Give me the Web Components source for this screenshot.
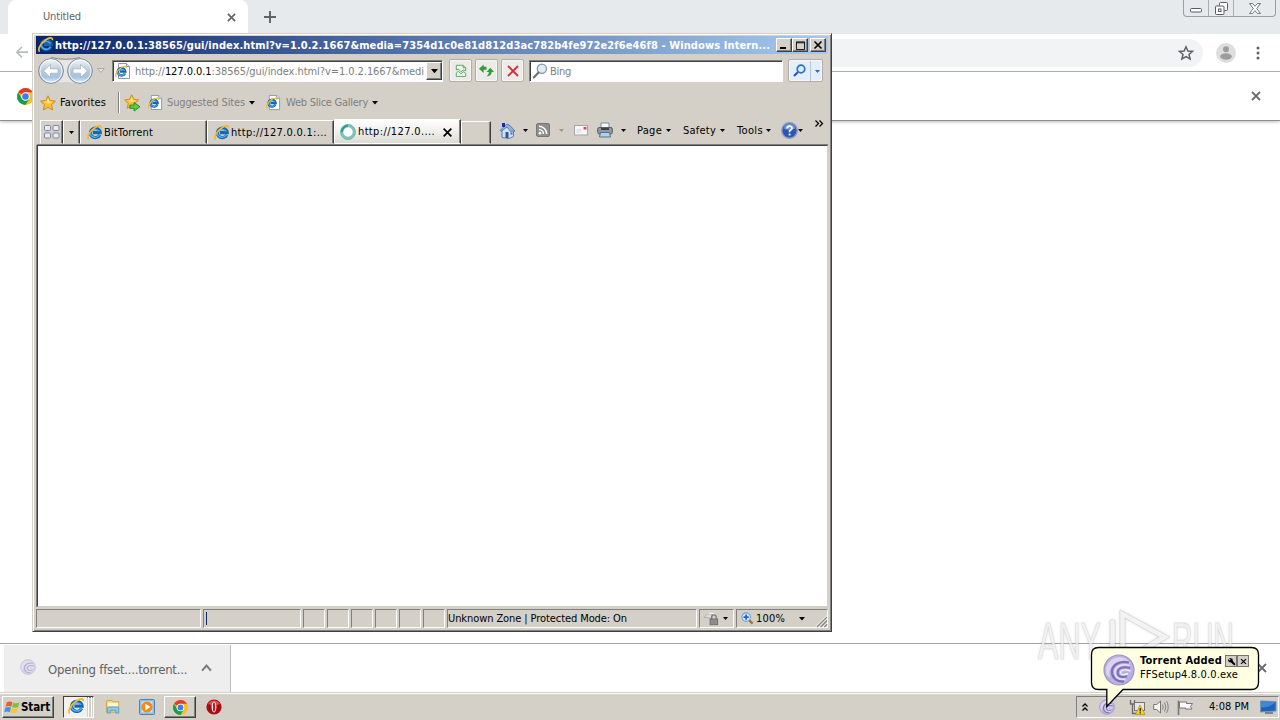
<!DOCTYPE html>
<html lang="en">
<head>
<meta charset="utf-8">
<title>Untitled</title>
<style>
  html, body {
    margin: 0;
    width: 1280px;
    height: 720px;
    overflow: hidden;
    background: #fff;
  }
  body {
    font: 11px/14px "DejaVu Sans Condensed", "DejaVu Sans", "Liberation Sans", sans-serif;
    color: #000;
    --face: #d4d0c8;
  }
</style>
</head>
<body>
<desk-top></desk-top>

<script>
const IE_E = `
  <path d="M12.800 9.800A4.900 4.700 0 1 1 13.200 7.600H6" fill="none" stroke="#1565b4" stroke-width="3.200"/>
  <path d="M12.600 9.800A5 4.700 0 0 1 3.200 8.200M4 6.400a5 4 0 0 1 8.400 0" fill="none" stroke="#4db4f2" stroke-width="1.300"/>
  <path d="M1.800 14.400C-1 13 2.600 6.400 7.600 3 11.400.3 15 .2 14.300 3.200" fill="none" stroke="#f5b82c" stroke-width="1.700"/>`;

const PAGE_E = `
  <path d="M3.500.5h8l3 3v12h-11z" fill="#fff" stroke="#8d97a5"/>
  <path d="M11.500.5v3h3" fill="#dfe6ee" stroke="#8d97a5"/>
  <g transform="translate(0 2.600) scale(.78)">${IE_E}</g>`;

const CHROME = `
  <circle cx="8" cy="8" r="8" fill="#fbc116"/>
  <path d="M8 8 1.100 4A8 8 0 0 1 14.900 4H8z" fill="#e33b2e"/>
  <path d="M1.100 4A8 8 0 0 0 8 16l3.600-6H8L4.500 9.800z" fill="#1a9c50"/>
  <circle cx="8" cy="8" r="4" fill="#fff"/><circle cx="8" cy="8" r="3.100" fill="#3b7ded"/>`;

const STAR = `<path d="M8 .8l2.200 4.800 5.200.6-3.900 3.500 1.100 5.200L8 12.300l-4.600 2.600 1.100-5.200L.6 6.200l5.200-.6z" fill="#fcc034" stroke="#cf8a1c"/>
  <path d="M8 3l1.400 3.400 3.400.4L8 8.400 3.400 6.800l3.300-.4z" fill="#ffe488"/>`;

const SWIRL = `
  <circle cx="16" cy="16" r="15" fill="#b9b2e0" stroke="#9a92cc" stroke-width="1.200"/>
  <path d="M3 19A13.500 13.500 0 0 1 28 10C20 5 9 7 6.500 18q-.5 3 .5 6Q4 22 3 19z" fill="#d8d4f1"/>
  <path d="M26 8.500C15 6 8 12 9 19.500c1 5 5.500 8.500 12 8" fill="none" stroke="#7a6fb8" stroke-width="2.200"/>
  <path d="M26.500 11.500C17 9 11 14 12 19.500c1 4.500 5 6.500 10.500 5.500" fill="none" stroke="#e8e5fa" stroke-width="1.500"/>
  <path d="M27 14C19 11.500 14 15 14.800 19.500c.8 3.500 5 4.500 9.200 2.500" fill="none" stroke="#7a6fb8" stroke-width="2"/>
  <path d="M27.500 17c-6-2.500-10.500-.5-10 2.200.5 2 4 1.800 7.500.3" fill="none" stroke="#f1effc" stroke-width="1.400"/>`;

const ICONS = {
  ie: ["0 0 16 16", IE_E],
  page: ["0 0 16 16", PAGE_E],
  chrome: ["0 0 16 16", CHROME],
  star: ["0 0 16 16", STAR],
  starAdd: ["0 0 16 16", `<g transform="scale(.9)">${STAR}</g>
    <path d="M5.500 10.500h4V8l5.500 4-5.500 4v-2.500h-4z" fill="#5ecb4a" stroke="#1d8a1e" stroke-width=".9"/>`],
  swirl: ["0 0 32 32", SWIRL],
  cross: ["0 0 10 10", `<path d="M1 1l8 8M9 1L1 9" stroke="currentColor" stroke-width="1.800"/>`],
  plus: ["0 0 12 12", `<path d="M6 0v12M0 6h12" stroke="#5f6368" stroke-width="1.900"/>`],
  backArrow: ["0 0 16 14", `<path d="M15 7H2M8 1L2 7l6 6" fill="none" stroke="#b9bcbf" stroke-width="1.800"/>`],
  bookmark: ["0 0 16 16", `<path d="M8 1.800l1.900 4.200 4.600.4-3.500 3 1.100 4.500L8 11.500l-4.100 2.400L5 9.400 1.500 6.400l4.600-.4z" fill="none" stroke="#5f6368" stroke-width="1.500"/>`],
  avatar: ["0 0 20 20", `<circle cx="10" cy="10" r="10" fill="#dedede"/><circle cx="10" cy="6.200" r="3" fill="#9d9d9d"/><ellipse cx="10" cy="13.500" rx="5.800" ry="3.200" fill="#9d9d9d"/>`],
  dots: ["0 0 4 14", `<circle cx="2" cy="2" r="1.500" fill="#5f6368"/><circle cx="2" cy="7" r="1.500" fill="#5f6368"/><circle cx="2" cy="12" r="1.500" fill="#5f6368"/>`],
  winMin: ["0 0 12 5", `<rect x=".5" y=".5" width="11" height="3.500" rx="1" fill="#fff" stroke="#555c68"/>`],
  winRestore: ["0 0 13 13", `<path d="M4.500 3.500v-2q0-1 1-1h6q1 0 1 1v6q0 1-1 1h-2" fill="#fff" stroke="#555c68"/><rect x=".5" y="4" width="8.500" height="8.500" rx="1" fill="#fff" stroke="#555c68"/><rect x="3.500" y="7" width="2.500" height="2.500" fill="#fff" stroke="#555c68"/>`],
  winClose: ["0 0 12 11", `<path d="M.5.5h3L6 3.300 8.500.5h3L7.700 5.500l3.800 5h-3L6 7.700 3.500 10.500h-3l3.800-5z" fill="#fff" stroke="#666d78" stroke-width=".9"/>`],
  down: ["0 0 5 3", `<path d="M0 0h5L2.500 3z" fill="currentColor"/>`],
  downOutline: ["0 0 9 6", `<path d="M.8.600h7.400L4.500 5z" fill="#e8e5df" stroke="#a9a69f"/>`],
  travel: ["0 0 58 30", `
    <defs>
      <linearGradient id="b" x2="0" y2="1"><stop stop-color="#f4f7fa"/><stop offset=".5" stop-color="#b9c7d6"/><stop offset=".75" stop-color="#a5c4dc"/><stop offset="1" stop-color="#dff4ff"/></linearGradient>
    </defs>
    <path d="M14.500 2Q29 6 43 2a13 13 0 0 1 0 26Q29 24 14.500 28a13 13 0 0 1 0-26z" fill="#e8e6e2"/>
    <path d="M14 1.500Q29 5 43 1.500" fill="none" stroke="#8a8c90"/>
    <circle cx="14" cy="15" r="12.400" fill="url(#b)" stroke="#7c8a9a"/><circle cx="43" cy="15" r="12.400" fill="url(#b)" stroke="#7c8a9a"/>
    <circle cx="14" cy="15" r="11" fill="none" stroke="#fff" stroke-opacity=".8"/><circle cx="43" cy="15" r="11" fill="none" stroke="#fff" stroke-opacity=".8"/>
    <path d="M6.500 15l7-6.500v4.300H21v4.400h-7.500v4.300zM50.500 15l-7-6.500v4.300H36v4.400h7.500v4.300z" fill="#fff" stroke="#a3b5c6" stroke-width=".8"/>`],
  compat: ["0 0 14 16", `<path d="M1.500 7V1.500h8l3 3V8l-3-1-2.500 2L4 6zM1.500 10.500L4 8.500l3 3 2.500-2.500 3 2v3.500h-11z" fill="#eef7ee" stroke="#4b9b55"/><path d="M9.500 1.500v3h3" fill="none" stroke="#4b9b55"/>`],
  refresh: ["0 0 16 14", `<path d="M0 5l5-4.500V3h3v3H5v3.500z" fill="#2f9e36"/><path d="M16 8.500L12 4 8 8.500h2.500c0 2-.5 3-2.500 4.500 4 0 5.500-2 5.500-4.500z" fill="#2f9e36"/>`],
  stop: ["0 0 12 12", `<path d="M1 1l10 10M11 1L1 11" stroke="#d2303a" stroke-width="1.800"/>`],
  glass: ["0 0 16 16", `<circle cx="9.800" cy="5.800" r="4.600" fill="#dcebf7" stroke="#8596a8" stroke-width="1.300"/><path d="M6.500 9.500L1.800 14.500" stroke="#6d6d70" stroke-width="2" stroke-linecap="round"/>`],
  find: ["0 0 13 13", `<circle cx="8" cy="5" r="3.800" fill="#d9ecff" stroke="#2e6fd0" stroke-width="1.700"/><path d="M5 8L1 12" stroke="#2e55b8" stroke-width="2.200"/>`],
  quad: ["0 0 16 14", `<g fill="#e6ebf5" stroke="#7d86a0"><rect x=".5" y=".5" width="6" height="5" rx="1"/><rect x="9" y=".5" width="6" height="5" rx="1"/><rect x=".5" y="8" width="6" height="5" rx="1"/><rect x="9" y="8" width="6" height="5" rx="1"/></g>`],
  spinner: ["0 0 16 16", `<circle cx="8" cy="8" r="6.200" fill="#fff" stroke="#7fc7bb" stroke-width="3"/><path d="M1.800 8A6.200 6.200 0 0 1 8 1.800" fill="none" stroke="#2d9c94" stroke-width="2.200"/><circle cx="8" cy="8" r="7.400" fill="none" stroke="#5ea9a4" stroke-width=".7"/>`],
  home: ["0 0 17 17", `<path d="M3 8v7.500l7 1 4.500-2V8L9 3z" fill="#cfe3f8" stroke="#5b7fb4"/><path d="M1 8.500L8 2l3 1.500L16 9l-4.500.5L8 5 2 9.500z" fill="#8fb1de" stroke="#52719f" stroke-width=".8"/><path d="M3 1h3v4H3z" fill="#2528a8"/><path d="M6.500 10h3v6h-3z" fill="#31549c"/><path d="M11.500 10.500h2v2h-2z" fill="#4268b0"/>`],
  rss: ["0 0 14 14", `<rect x=".5" y=".5" width="13" height="13" rx="1.500" fill="#8e8e8e" stroke="#777"/><circle cx="4" cy="10.200" r="1.400" fill="#fff"/><path d="M3 6.500a4.500 4.500 0 0 1 4.500 4.500M3 3.300A7.800 7.800 0 0 1 10.700 11" fill="none" stroke="#fff" stroke-width="1.500"/>`],
  mail: ["0 0 14 11", `<rect x=".5" y=".5" width="13" height="9.500" fill="#f7f7f9" stroke="#a3a5ad"/><path d="M9.500 2h3v2.500h-3z" fill="#d9474b"/><path d="M2.500 5h5M2.500 7h4" stroke="#cfd1d8"/>`],
  printer: ["0 0 16 16", `<path d="M4 1h8v6H4z" fill="#f3f8ff" stroke="#7c8aa0"/><rect x=".7" y="5.500" width="14.600" height="6.500" rx="1.500" fill="#94979c" stroke="#5a5d62"/><path d="M4 7h8" stroke="#2d2f33" stroke-width="1.600"/><path d="M3.500 10.500h9l1 4.500h-11z" fill="#a9d4f5" stroke="#5d7084"/>`],
  help: ["0 0 17 17", `<circle cx="8.500" cy="8.500" r="7.700" fill="#2c56b8" stroke="#8b9bb8" stroke-width="1.400"/><path d="M2.500 6.500a6.300 6.300 0 0 1 12 0Q8 9 2.500 6.500z" fill="#6c93df"/><path d="M6 6.500q.2-2.300 2.600-2.300t2.400 2Q11 7.500 8.600 8.800v1.400" fill="none" stroke="#fff" stroke-width="1.700"/><circle cx="8.600" cy="12.500" r="1.100" fill="#fff"/>`],
  chevrons: ["0 0 8 7", `<path d="M.5.5l3 3-3 3M4.500.5l3 3-3 3" fill="none" stroke="#000" stroke-width="1.300"/>`],
  mini: ["0 0 10 10", `<path d="M1 7h6v2H1z"/>`],
  maxi: ["0 0 10 10", `<path d="M.5 1h9v8.500h-9zM.5 2h9" fill="none" stroke="#000"/>`],
  shut: ["0 0 10 10", `<path d="M1.500 1.500l7 7M8.500 1.500l-7 7" stroke="#000" stroke-width="1.600"/>`],
  caret: ["0 0 10 7", `<path d="M1 6l4-4.500L9 6" fill="none" stroke="#7a7a7a" stroke-width="1.900"/>`],
  lock: ["0 0 18 16", `<path d="M1 7l4-4 5 1v5l-4-2z" fill="#dedede" stroke="#aaa"/><path d="M6 3q5-2 7 2" fill="none" stroke="#eee" stroke-width="1.500"/><rect x="7.500" y="8.500" width="8" height="6" fill="#8c8c8c" stroke="#6d6d6d"/><path d="M9 8.500V6.500a2.500 2.500 0 0 1 5 0v2" fill="none" stroke="#777" stroke-width="1.300"/>`],
  zoomIn: ["0 0 14 14", `<circle cx="5.500" cy="5.500" r="4.600" fill="#d8ebff" stroke="#6aa3e0" stroke-width="1.200"/><path d="M5.500 2.700v5.600M2.700 5.500h5.600" stroke="#1d62c4" stroke-width="1.800"/><path d="M9 9l3.500 3.500" stroke="#b06b3a" stroke-width="2.400"/>`],
  grip: ["0 0 13 13", `<path d="M1 13L13 1M5 13l8-8M9 13l4-4" stroke="#fff" stroke-width="1.300"/><path d="M2 13L13 2M6 13l7-7M10 13l3-3" stroke="#86837b" stroke-width="1.300"/>`],
  flag: ["0 0 16 15", `<path d="M2 2.500Q5 .500 8 2.500L6.700 7.300Q4 5.500.5 7.300z" fill="#ec5b2a"/><path d="M8.800 2.800Q12 4.500 15.500 2.500L14 7.500Q11 9 7.500 7.500z" fill="#7fc043"/><path d="M.3 8.200Q3.500 6.500 6.400 8.200L5 13Q2.500 11.300-.8 13z" fill="#3d94e0"/><path d="M7.300 8.500Q10.500 10 13.700 8.400L12.300 13Q9 14.800 6 13.200z" fill="#fbc62c"/>`],
  folder: ["0 0 17 16", `<path d="M1.500 3.500l1-2h5l1 1.500h6v11h-13z" fill="#f4d774" stroke="#c9a444"/><path d="M3 4h11v4H3z" fill="#fdf6cf"/><path d="M2.500 15V9.500q0-1 1-1h10q1 0 1 1V15h-3v-3h-6v3z" fill="#8cc9ec" stroke="#5b9ec9"/>`],
  player: ["0 0 16 16", `<rect x=".5" y=".5" width="15" height="15" rx="1" fill="#8bc0ea" stroke="#4b84b8"/><rect x="2.500" y="2.500" width="11" height="11" fill="#c9e4f8"/><circle cx="8" cy="8" r="5.600" fill="#f28a1a"/><path d="M6.300 4.800v6.400L11.500 8z" fill="#fff"/>`],
  opera: ["0 0 16 16", `<circle cx="8" cy="8" r="7.600" fill="#a80d12"/><path d="M2 5a7 7 0 0 1 12 0Q8 7.500 2 5z" fill="#dc4b48"/><ellipse cx="8" cy="8" rx="2.400" ry="5.400" fill="#fff"/><ellipse cx="8" cy="8" rx="1.200" ry="4.800" fill="#c41a1c"/>`],
  up2: ["0 0 6 8", `<path d="M.5 3.500L3 1l2.500 2.500M.5 7.500L3 5l2.500 2.500" fill="none" stroke="#000" stroke-width="1.300"/>`],
  net: ["0 0 17 16", `<path d="M1.500 1v4h4V1M3.500 5v9.500H7" fill="none" stroke="#686868" stroke-width="1.300"/><rect x="5.500" y="3.500" width="10" height="8" fill="#e7e7e7" stroke="#757575"/><path d="M11 6l5 9.500H6.500z" fill="#f7d423" stroke="#b89410" stroke-width=".8"/><path d="M11.200 9v3.500M11.200 13.300v1.200" stroke="#222" stroke-width="1.300"/>`],
  sound: ["0 0 16 14", `<path d="M.7 4.500h3L7.500 1v12L3.700 9.500h-3z" fill="#f4f4f4" stroke="#757575"/><path d="M9.500 4.500q1.500 2.500 0 5M11.500 2.500q3 4.500 0 9M13.500 1q3.500 6 0 12" fill="none" stroke="#858585"/>`],
  action: ["0 0 17 15", `<path d="M1.500.5V15" stroke="#777" stroke-width="1.600"/><path d="M2.500 2h7v1.500h6L13.500 6.500 15 9H8.500V8h-6z" fill="#fbfbfb" stroke="#777"/>`],
  screen: ["0 0 17 14", `<path d="M.5 1l15.500.5v9.500L.5 12z" fill="#1c62b8" stroke="#7b94b5"/><path d="M1 1.500l14.500.5Q10 8 1 7.500z" fill="#3f86d6"/><path d="M5 13h8" stroke="#5d6a7c" stroke-width="1.500"/>`],
  wrench: ["0 0 10 10", `<path d="M1 3l2-2 3 1 .5 2.500L9.500 8 8 9.500 4.500 6 2 5.500z" fill="#000"/><path d="M1 1l2.500 2.500" stroke="#d4d0c8" stroke-width="1.300"/>`],
};

class UiIcon extends HTMLElement {
  connectedCallback() {
    const [box, body] = ICONS[this.getAttribute("name")];
    const [, , w, h] = box.split(" ");
    const width = this.getAttribute("w") || w;
    this.attachShadow({ mode: "open" }).innerHTML = `
      <style>:host { display: block; flex: none; } svg { display: block; overflow: visible; }</style>
      <svg width="${width}" height="${(width * h) / w}" viewBox="${box}" aria-hidden="true">${body}</svg>`;
  }
}

// one line of text, tracked so that it takes exactly w pixels
class FitLabel extends HTMLElement {
  connectedCallback() {
    this.attachShadow({ mode: "open" }).innerHTML =
      "<style>:host { display: block; flex: none; width: max-content; white-space: nowrap; }</style><slot></slot>";
    const want = Number(this.getAttribute("w"));
    const natural = this.getBoundingClientRect().width;
    this.style.letterSpacing = (want - natural) / this.textContent.length + "px";
  }
}

function define(name, css, html) {
  customElements.define(name, class extends HTMLElement {
    connectedCallback() {
      this.attachShadow({ mode: "open" }).innerHTML = `<style>* { box-sizing: border-box; } ${css}</style>${html}`;
    }
  });
}

define("desk-top", `
  :host { display: flex; flex-direction: column; position: relative; width: 1280px; height: 720px; overflow: hidden; }
  main { flex: 1; background: #fff; }
  ie-window { position: absolute; left: 32px; top: 33px; }
  any-run { position: absolute; left: 1038px; top: 608px; }
  tray-balloon { position: absolute; left: 1090px; top: 646px; }
`, `
  <chrome-tabs></chrome-tabs>
  <chrome-toolbar></chrome-toolbar>
  <chrome-infobar></chrome-infobar>
  <main></main>
  <chrome-downloads></chrome-downloads>
  <task-bar></task-bar>
  <ie-window></ie-window>
  <any-run></any-run>
  <tray-balloon></tray-balloon>
`);

define("chrome-tabs", `
  :host { display: flex; height: 34px; background: #e7eaed; padding-left: 8px; color: #5f6368; }
  .tab { display: flex; align-items: center; width: 240px; padding: 0 12px 0 35px; justify-content: space-between; background: #fff; border-radius: 8px 8px 0 0; }
  .new { margin: 11px auto 0 16px; }
  .controls { display: grid; grid-template-columns: 25px 25px 41px; width: 93px; height: 17px; margin-right: 4px; border: 1px solid #9a9fa6; border-top: 0; border-radius: 0 0 4px 4px; }
  .controls div { display: grid; place-items: center; border-right: 1px solid #a9adb3; }
  .controls div:last-child { border: 0; }
  .controls div:first-child { padding-top: 5px; }
`, `
  <div class="tab"><fit-label w="38">Untitled</fit-label><ui-icon name="cross" w="9"></ui-icon></div>
  <ui-icon class="new" name="plus"></ui-icon>
  <div class="controls">
    <div><ui-icon name="winMin"></ui-icon></div>
    <div><ui-icon name="winRestore"></ui-icon></div>
    <div><ui-icon name="winClose"></ui-icon></div>
  </div>
`);

define("chrome-toolbar", `
  :host { display: flex; align-items: center; height: 38px; background: #fff; border-bottom: 1px solid #a9abad; padding: 0 20px 0 15px; box-sizing: border-box; }
  .omnibox { flex: 1; display: flex; align-items: center; justify-content: flex-end; height: 28px; margin: 0 13px 0 76px; padding-right: 9px; border-radius: 14px; background: #f1f3f4; }
  .menu { margin-left: 20px; }
`, `
  <ui-icon name="backArrow" w="14"></ui-icon>
  <div class="omnibox"><ui-icon name="bookmark"></ui-icon></div>
  <ui-icon name="avatar"></ui-icon>
  <ui-icon class="menu" name="dots"></ui-icon>
`);

define("chrome-infobar", `
  :host { display: flex; align-items: center; justify-content: space-between; height: 49px; background: #fff; border-bottom: 1px solid #8d8d8d; box-shadow: 0 1px 3px #bbb; padding: 0 19px 0 17px; color: #6b6b6b; z-index: 0; box-sizing: border-box; }
`, `
  <ui-icon name="chrome" w="17"></ui-icon>
  <ui-icon name="cross" w="10"></ui-icon>
`);

define("chrome-downloads", `
  :host { display: flex; height: 50px; background: #fff; border-top: 1px solid #a2a5a3; padding: 1px 13px 0 4px; justify-content: space-between; align-items: center; color: #6b6b6b; box-sizing: border-box; }
  .item { display: flex; align-items: center; width: 227px; height: 48px; padding: 0 18px 2px 16px; background: #eee; border-right: 1px solid #bcbcbc; font-size: 13px; color: #5f6063; }
  .item fit-label { margin: 4px auto 0 12px; }
  .file { opacity: .5; margin-bottom: 2px; }
  .close { margin-bottom: 3px; }
`, `
  <div class="item">
    <ui-icon class="file" name="swirl" w="16"></ui-icon>
    <fit-label w="139">Opening ffset....torrent...</fit-label>
    <ui-icon name="caret" w="11"></ui-icon>
  </div>
  <ui-icon class="close" name="cross"></ui-icon>
`);

define("ie-window", `
  :host { display: flex; flex-direction: column; width: 800px; height: 599px; background: var(--face); box-sizing: border-box; padding: 2px 2px 2px 3px;
    border: 1px solid; border-color: #d4d0c8 #404040 #404040 #d4d0c8; box-shadow: inset 1px 1px #fff, inset -1px -1px #808080; }
  main { flex: 1; background: #fff; border: 1px solid; border-color: #404040 #d4d0c8 #d4d0c8 #404040; box-shadow: 0 -1px #808080, -1px 0 #808080; margin: 0 1px 0 1px; }
`, `
  <ie-title></ie-title>
  <ie-nav></ie-nav>
  <ie-favorites></ie-favorites>
  <ie-tabs></ie-tabs>
  <main></main>
  <ie-status></ie-status>
`);

define("ie-title", `
  :host { display: flex; align-items: center; height: 18px; margin-right: 1px; padding: 0 2px; background: linear-gradient(90deg, #0a246a, #a6caf0); color: #fff; font-weight: bold; box-sizing: border-box; }
  .logo { margin-right: 1px; }
  fit-label { margin: 1px auto 0 0; }
  .btn { display: grid; place-items: center; width: 16px; height: 14px; background: var(--face); border: 1px solid; border-color: #fff #404040 #404040 #fff; box-shadow: inset -1px -1px #808080; }
  .btn:last-child { margin-left: 2px; }
`, `
  <ui-icon class="logo" name="ie"></ui-icon>
  <fit-label w="715">http://127.0.0.1:38565/gui/index.html?v=1.0.2.1667&amp;media=7354d1c0e81d812d3ac782b4fe972e2f6e46f8 - Windows Intern...</fit-label>
  <div class="btn"><ui-icon name="mini"></ui-icon></div>
  <div class="btn"><ui-icon name="maxi" w="9"></ui-icon></div>
  <div class="btn"><ui-icon name="shut"></ui-icon></div>
`);

define("ie-nav", `
  :host { display: grid; grid-template-columns: 60px 15px 337px 26px 26px 28px 259px 35px; align-items: center; height: 33px; padding-left: 1px; color: #808080; }
  .field { display: flex; align-items: center; height: 22px; background: #fff; border: 1px solid; border-color: #808080 #fff #fff #808080; box-shadow: inset 1px 1px #404040; padding-left: 2px; }
  .address { width: 331px; }
  .address fit-label { margin: 2px auto 0 4px; }
  b { font-weight: normal; color: #000; }
  .drop { display: grid; place-items: center; width: 16px; height: 18px; margin: 1px 0 0; color: #000; background: var(--face); border: 1px solid; border-color: #fff #404040 #404040 #fff; box-shadow: inset -1px -1px #808080; }
  .search { width: 254px; gap: 2px; }
  .search fit-label { margin-top: 2px; }
  .btn { display: grid; place-items: center; width: 23px; height: 23px; background: #ecebe8; border: 1px solid #b1aeaa; border-radius: 2px; box-shadow: inset 0 0 0 1px #f8f7f6; }
  .go { grid-template-columns: 21px 13px; width: 35px; background: #e4eef9; color: #2c68b8; }
  .go ui-icon:last-child { border-left: 1px solid #b6c4d4; padding: 9px 3px 8px 4px; }
`, `
  <ui-icon name="travel" w="58"></ui-icon>
  <ui-icon name="downOutline" w="8"></ui-icon>
  <div class="field address">
    <ui-icon name="page"></ui-icon>
    <fit-label w="289">http://<b>127.0.0.1</b>:38565/gui/index.html?v=1.0.2.1667&amp;medi</fit-label>
    <div class="drop"><ui-icon name="down" w="7"></ui-icon></div>
  </div>
  <div class="btn"><ui-icon name="compat" w="12"></ui-icon></div>
  <div class="btn"><ui-icon name="refresh" w="15"></ui-icon></div>
  <div class="btn"><ui-icon name="stop"></ui-icon></div>
  <div class="field search"><ui-icon name="glass"></ui-icon><fit-label w="21">Bing</fit-label></div>
  <div class="btn go"><ui-icon name="find"></ui-icon><ui-icon name="down" w="5"></ui-icon></div>
`);

define("ie-favorites", `
  :host { display: grid; grid-template-columns: 20px 58px 6px 24px 19px 82px 17px 20px 86px 10px; align-items: center; height: 31px; padding-left: 4px; color: #808080; }
  .sep { width: 2px; height: 21px; background: #fff; border-left: 1px solid #808080; }
  .fav { color: #000; }
  .arrow { color: #000; }
`, `
  <ui-icon name="star"></ui-icon>
  <fit-label class="fav" w="46">Favorites</fit-label>
  <div class="sep"></div>
  <ui-icon name="starAdd" w="17"></ui-icon>
  <ui-icon name="page" w="15"></ui-icon>
  <fit-label w="78">Suggested Sites</fit-label>
  <ui-icon class="arrow" name="down" w="6"></ui-icon>
  <ui-icon name="page" w="15"></ui-icon>
  <fit-label w="82">Web Slice Gallery</fit-label>
  <ui-icon class="arrow" name="down" w="6"></ui-icon>
`);

define("ie-tabs", `
  :host { display: flex; height: 27px; padding: 2px 0 1px 4px; box-sizing: border-box; }
  .cell { display: grid; place-items: center; height: 24px; border: 1px solid; border-color: #fff #404040 transparent #fff; box-shadow: inset -1px 0 #808080; }
  .quad { width: 23px; }
  .drop { width: 17px; }
  .blank { width: 30px; margin-top: 1px; height: 23px; }
  .bar { display: grid; height: 20px; padding-left: 8px; align-items: center; grid-template-rows: 20px;
    grid-template-columns: 24px 13px 23px 15px 23px 24px 16px 29px 17px 37px 17px 29px 15px 17px 17px 10px; }
  .bar fit-label { margin-top: 1px; }
  .off { color: #9a978f; }
  .more { align-self: start; }
`, `
  <div class="cell quad"><ui-icon name="quad"></ui-icon></div>
  <div class="cell drop"><ui-icon name="down"></ui-icon></div>
  <ie-tab><ui-icon name="ie"></ui-icon><fit-label w="49">BitTorrent</fit-label></ie-tab>
  <ie-tab><ui-icon name="ie"></ui-icon><fit-label w="96">http://127.0.0.1:...</fit-label></ie-tab>
  <ie-tab active><ui-icon name="spinner"></ui-icon><fit-label w="77">http://127.0....</fit-label><ui-icon slot="end" name="shut" w="11"></ui-icon></ie-tab>
  <div class="cell blank"></div>
  <div class="bar">
    <ui-icon name="home"></ui-icon><ui-icon name="down"></ui-icon>
    <ui-icon name="rss"></ui-icon><ui-icon class="off" name="down"></ui-icon>
    <ui-icon name="mail"></ui-icon>
    <ui-icon name="printer"></ui-icon><ui-icon name="down"></ui-icon>
    <fit-label w="25">Page</fit-label><ui-icon name="down"></ui-icon>
    <fit-label w="33">Safety</fit-label><ui-icon name="down"></ui-icon>
    <fit-label w="26">Tools</fit-label><ui-icon name="down"></ui-icon>
    <ui-icon name="help"></ui-icon><ui-icon name="down"></ui-icon>
    <ui-icon class="more" name="chevrons"></ui-icon>
  </div>
`);

define("ie-tab", `
  :host { display: flex; align-items: center; gap: 1px; width: 127px; height: 24px; padding: 1px 7px 0 6px; box-sizing: border-box;
    border: 1px solid; border-color: #fff #404040 transparent #fff; box-shadow: inset -1px 0 #808080; }
  :host([active]) { background: linear-gradient(#fff, #f0efec 50%, #dedbd5); height: 25px; margin-top: -1px; padding-left: 5px; width: 127px; gap: 2px; }
  ::slotted([slot=end]) { margin-left: auto; }
  slot[name=end] { display: block; margin-left: auto; }
`, `<slot></slot><slot name="end"></slot>`);

define("ie-status", `
  :host { display: flex; gap: 2px; height: 22px; margin-right: 1px; padding: 2px 0 1px; box-sizing: border-box; }
  .pane { display: flex; align-items: center; height: 19px; border: 1px solid; border-color: #808080 #fff #fff #808080; }
  .url { width: 165px; }
  .load { width: 98px; padding-left: 2px; }
  .load::before { content: ""; width: 1px; height: 13px; background: #0a246a; }
  .mini { width: 22px; }
  .zone { width: 250px; }
  .lock { width: 35px; padding-left: 3px; gap: 3px; }
  .zoom { flex: 1; padding-left: 4px; }
  .zoom fit-label { margin: 0 14px 0 2px; }
  .grip { margin: 5px 0 0 auto; }
`, `
  <div class="pane url"></div>
  <div class="pane load"></div>
  <div class="pane mini"></div><div class="pane mini"></div><div class="pane mini"></div>
  <div class="pane mini"></div><div class="pane mini"></div><div class="pane mini"></div>
  <div class="pane zone"><fit-label w="179">Unknown Zone | Protected Mode: On</fit-label></div>
  <div class="pane lock"><ui-icon name="lock" w="17"></ui-icon><ui-icon name="down"></ui-icon></div>
  <div class="pane zoom"><ui-icon name="zoomIn" w="13"></ui-icon><fit-label w="29">100%</fit-label><ui-icon name="down" w="6"></ui-icon><ui-icon class="grip" name="grip" w="12"></ui-icon></div>
`);

define("task-bar", `
  :host { display: flex; align-items: flex-start; height: 27px; padding: 3px 1px 0 2px; background: var(--face); box-shadow: 0 -1px #d4d0c8, inset 0 1px #fff; box-sizing: border-box; }
  .raised { display: flex; align-items: center; height: 22px; border: 1px solid; border-color: #fff #404040 #404040 #fff; box-shadow: inset -1px -1px #808080; }
  .start { width: 52px; padding-left: 2px; gap: 1px; font-weight: bold; font-size: 11.500px; }
  .running { width: 32px; margin-left: 9px; justify-content: center; }
  .pressed { display: flex; align-items: center; width: 31px; height: 22px; margin-left: 9px; border: 1px solid; border-color: #404040 #fff #fff #404040; box-shadow: inset 1px 1px #808080; }
  .pressed ui-icon { margin: 1px 0 0 4px; }
  .pressed i, .pressed u { width: 2px; height: 20px; border-left: 1px solid #fff; margin-left: 1px; }
  .active { background: #f3f1ee; width: 23px; height: 20px; display: flex; }
  .plain { margin: 3px 0 0 11px; }
  .player { margin-left: 18px; }
  .opera { margin-left: 10px; }
  .tray { display: grid; grid-template-columns: 17px 30px 24px 24px 32px 51px 17px; align-items: center; grid-template-rows: 20px; margin-left: auto; width: 203px; height: 22px; padding-left: 5px; border: 1px solid; border-color: #808080 #fff #fff #808080; }
`, `
  <div class="raised start"><ui-icon name="flag" w="15"></ui-icon><fit-label w="29">Start</fit-label></div>
  <div class="pressed"><span class="active"><ui-icon name="ie" w="17"></ui-icon></span><i></i><u></u></div>
  <ui-icon class="plain" name="folder" w="16"></ui-icon>
  <ui-icon class="plain player" name="player"></ui-icon>
  <div class="raised running"><ui-icon name="chrome" w="15"></ui-icon></div>
  <ui-icon class="plain opera" name="opera"></ui-icon>
  <div class="tray">
    <ui-icon name="up2"></ui-icon>
    <ui-icon name="swirl" w="16"></ui-icon>
    <ui-icon name="net"></ui-icon>
    <ui-icon name="sound"></ui-icon>
    <ui-icon name="action"></ui-icon>
    <fit-label w="40">4:08 PM</fit-label>
    <ui-icon name="screen"></ui-icon>
  </div>
`);

define("tray-balloon", `
  :host { display: grid; width: 170px; height: 62px; }
  .shape, .body { grid-area: 1 / 1; }
  .body { display: grid; grid-template-columns: 37px 83px 28px; height: 46px; padding: 8px 0 0 13px; }
  .title { font-weight: bold; }
  .text { line-height: 14px; }
  .btns { display: flex; height: 13px; margin: 1px 0 0 2px; }
  .btns span { display: grid; place-items: center; width: 12px; height: 12px; background: #d4d0c8; border: 1px solid #77746d; }
`, `
  <svg class="shape" width="170" height="62" aria-hidden="true">
    <path d="M8.500 1.500h153q7 0 7 7v28q0 7-7 7H33L16.800 60.500V43.500H8.500q-7 0-7-7v-28q0-7 7-7z" fill="#ffffe1" stroke="#000" stroke-width="1.300"/>
  </svg>
  <div class="body">
    <ui-icon name="swirl"></ui-icon>
    <div class="text"><fit-label class="title" w="82">Torrent Added</fit-label><fit-label w="98">FFSetup4.8.0.0.exe</fit-label></div>
    <div class="btns"><span><ui-icon name="wrench" w="9"></ui-icon></span><span><ui-icon name="shut" w="7"></ui-icon></span></div>
  </div>
`);

define("any-run", `
  :host { display: flex; align-items: flex-start; width: 200px; height: 58px; font: 51px/58px "Liberation Sans", sans-serif; color: rgba(255,255,255,.6);
    -webkit-text-stroke: 1px rgba(150,150,150,.18); text-shadow: 0 0 3px rgba(110,110,110,.3); }
  .word { width: 64px; margin-top: 5px; height: 58px; }
  .word span { display: inline-block; transform-origin: 0 0; transform: scaleX(.6); }
  .word:last-child span { transform: scaleX(.56); }
  svg { width: 70px; height: 58px; flex: none; filter: drop-shadow(0 0 1.500px rgba(110,110,110,.4)); }
`, `
  <div class="word"><span>ANY</span></div>
  <svg viewBox="0 0 70 58" aria-hidden="true">
    <path d="M8 12h5v40H8zM18 2l50 27-34 20v-6l23-14L23 10v42h-5z" fill="rgba(255,255,255,.6)" stroke="rgba(150,150,150,.25)"/>
  </svg>
  <div class="word"><span>RUN</span></div>
`);

customElements.define("ui-icon", UiIcon);
customElements.define("fit-label", FitLabel);
</script>
</body>
</html>
